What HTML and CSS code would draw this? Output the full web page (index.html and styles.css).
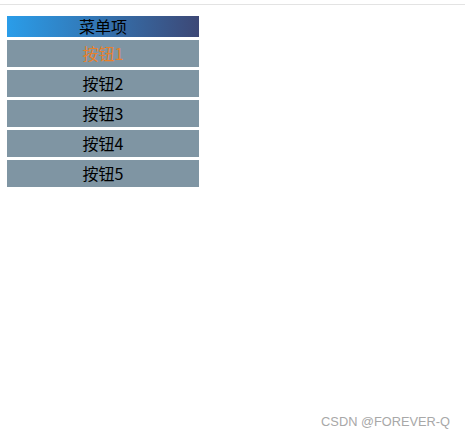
FILE: index.html
```html
<!DOCTYPE html>
<html>
<head>
<meta charset="utf-8">
<link rel="stylesheet" href="styles.css">
</head>
<body>
<div class="topline"></div>
<div class="menu">
  <div class="menu-title">菜单项</div>
  <div class="btn active">按钮1</div>
  <div class="btn">按钮2</div>
  <div class="btn">按钮3</div>
  <div class="btn">按钮4</div>
  <div class="btn">按钮5</div>
</div>
<div class="watermark">CSDN @FOREVER-Q</div>
</body>
</html>
```
FILE: styles.css
```css
html, body {
  margin: 0;
  padding: 0;
  background: #fff;
  height: 440px;
  overflow: hidden;
}
body {
  position: relative;
  font-family: "Noto Sans CJK SC", "Noto Sans", sans-serif;
}
.topline {
  margin-top: 4px;
  height: 1px;
  background: #e3e3e3;
}
.menu {
  margin: 11px 0 0 7px;
  width: 192px;
  display: flex;
  flex-direction: column;
  gap: 3px;
}
.menu-title {
  height: 21px;
  line-height: 21px;
  text-align: center;
  font-size: 16px;
  color: #000;
  background: linear-gradient(to right, #2a9de9, #3d4876);
}
.btn {
  height: 27px;
  line-height: 27px;
  text-align: center;
  font-size: 16px;
  color: #000;
  background: #7f95a3;
}
.btn.active {
  color: #e8802a;
}
.watermark {
  position: absolute;
  right: 15px;
  top: 414px;
  font-family: "Liberation Sans", Arial, sans-serif;
  font-size: 12.8px;
  color: #a8a8a8;
}
```
